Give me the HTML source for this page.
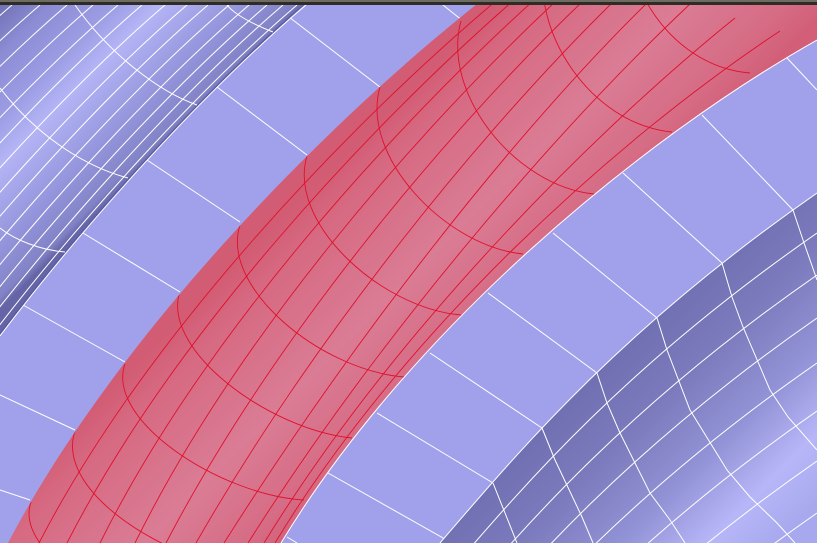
<!DOCTYPE html>
<html><head><meta charset="utf-8"><style>
html,body{margin:0;padding:0;width:817px;height:543px;overflow:hidden;background:#a1a0eb}
svg{display:block;overflow:hidden;position:absolute;left:0;top:0}
</style></head><body>
<svg width="817" height="543" viewBox="0 0 817 543" xmlns="http://www.w3.org/2000/svg">
<defs>
<linearGradient id="lt" gradientUnits="userSpaceOnUse" x1="155" y1="155" x2="0" y2="0">
<stop offset="0" stop-color="#6464a6"/><stop offset="0.04" stop-color="#8282c6"/>
<stop offset="0.2" stop-color="#9494dc"/><stop offset="0.47" stop-color="#b4b4f6"/>
<stop offset="0.62" stop-color="#9c9ce4"/><stop offset="0.82" stop-color="#8c8cd4"/>
<stop offset="1" stop-color="#6e6eb2"/></linearGradient>
<linearGradient id="br" gradientUnits="userSpaceOnUse" x1="487" y1="487" x2="660" y2="660">
<stop offset="0" stop-color="#7070b2"/><stop offset="0.25" stop-color="#7a7abc"/>
<stop offset="0.55" stop-color="#9292d6"/><stop offset="0.8" stop-color="#b6b6f8"/>
<stop offset="1" stop-color="#a8a8ee"/></linearGradient>
<linearGradient id="rd" gradientUnits="userSpaceOnUse" x1="250" y1="250" x2="420" y2="420">
<stop offset="0" stop-color="#d25c74"/><stop offset="0.15" stop-color="#d66a82"/>
<stop offset="0.55" stop-color="#da7c95"/><stop offset="0.85" stop-color="#d66c85"/>
<stop offset="1" stop-color="#d25e77"/></linearGradient>
<clipPath id="cl"><path d="M0,0 L310,0 C200,95 80,230 0,335 Z"/></clipPath>
<clipPath id="cr"><path d="M482,0 L817,0 L817,40 C640,140 410,330 281,543 L8,543 C120,330 330,120 482,0 Z"/></clipPath>
<clipPath id="cb"><path d="M440,543 C520,450 620,330 817,193 L817,543 Z"/></clipPath>
</defs>

<g stroke="#ffffff" stroke-width="1" fill="none">
<line x1="289" y1="17" x2="380" y2="87"/>
<line x1="443" y1="5" x2="463" y2="21"/>
<line x1="217" y1="87" x2="307" y2="155"/>
<line x1="147" y1="160" x2="240" y2="222"/>
<line x1="83" y1="233" x2="180" y2="292"/>
<line x1="23" y1="305" x2="125" y2="362"/>
<line x1="0" y1="395" x2="75" y2="430"/>
<line x1="0" y1="490" x2="30" y2="500"/>
<line x1="787" y1="58" x2="817" y2="90"/>
<line x1="702" y1="115" x2="793" y2="210"/>
<line x1="623" y1="173" x2="722" y2="263"/>
<line x1="553" y1="233" x2="657" y2="318"/>
<line x1="488" y1="293" x2="597" y2="373"/>
<line x1="430" y1="353" x2="542" y2="428"/>
<line x1="377" y1="413" x2="493" y2="483"/>
<line x1="328" y1="473" x2="452" y2="543"/>
<line x1="287" y1="537" x2="297" y2="543"/>
</g>

<path d="M0,0 L310,0 C200,95 80,230 0,335 Z" fill="url(#lt)"/>
<g clip-path="url(#cl)" stroke="#ffffff" stroke-width="1" fill="none">
<path d="M305,5 C200,95 80,230 0,335" stroke="#5a5aa0" stroke-width="3"/>
<path transform="translate(-8,0)" d="M305,5 C200,95 80,230 0,335"/>
<path transform="translate(-22,0)" d="M305,5 C200,95 80,230 0,335"/>
<path transform="translate(-38,0)" d="M305,5 C200,95 80,230 0,335"/>
<path transform="translate(-56,0)" d="M305,5 C200,95 80,230 0,335"/>
<path transform="translate(-76,0)" d="M305,5 C200,95 80,230 0,335"/>
<path transform="translate(-97,0)" d="M305,5 C200,95 80,230 0,335"/>
<path transform="translate(-118,0)" d="M305,5 C200,95 80,230 0,335"/>
<path transform="translate(-140,0)" d="M305,5 C200,95 80,230 0,335"/>
<path transform="translate(-163,0)" d="M305,5 C200,95 80,230 0,335"/>
<path transform="translate(-187,0)" d="M305,5 C200,95 80,230 0,335"/>
<path transform="translate(-212,0)" d="M305,5 C200,95 80,230 0,335"/>
<path transform="translate(-238,0)" d="M305,5 C200,95 80,230 0,335"/>
<path transform="translate(-265,0)" d="M305,5 C200,95 80,230 0,335"/>
<path transform="translate(-293,0)" d="M305,5 C200,95 80,230 0,335"/>
<path d="M273,32 C255,25 235,15 227,5"/>
<path d="M197,105 C160,92 110,55 75,5"/>
<path d="M128,178 C90,168 40,140 0,88"/>
<path d="M65,252 C40,250 15,240 0,228"/>
</g>
<path d="M306,5 C200,95 80,230 0,336" stroke="#ffffff" stroke-width="1" fill="none"/>

<path d="M482,0 L817,0 L817,40 C640,140 410,330 281,543 L8,543 C120,330 330,120 482,0 Z" fill="url(#rd)"/>
<g clip-path="url(#cr)" fill="none" stroke="#e0102c" stroke-width="0.9">
<path d="M497,0 C351,123 147,334 39,543"/>
<path d="M514,0 C371,125 173,335 67,543"/>
<path d="M534,0 C393,128 203,336 100,543"/>
<path d="M557,0 C417,131 236,338 135,543"/>
<path d="M584,0 C445,133 272,340 166,543"/>
<path d="M615,0 C477,135 311,342 196,543"/>
<path d="M650,0 C510,137 350,344 224,543"/>
<path d="M690,4 C548,138 373,345 248,543"/>
<path d="M735,18 C585,139 390,338 264,543"/>
<path d="M780,31 C615,140 402,333 275,543"/>
<path d="M31,502 C11,560 150,630 240,640"/>
<path d="M75,431 C55,490 160,560 262,575"/>
<path d="M125,364 C105,420 220,495 304,500"/>
<path d="M180,291 C160,350 270,430 352,438"/>
<path d="M240,225 C220,287 320,370 404,377"/>
<path d="M307,156 C287,222 380,308 461,315"/>
<path d="M380,87 C360,156 445,246 523,254"/>
<path d="M461,21 C441,93 515,186 594,194"/>
<path d="M545,-40 C530,30 590,124 672,132"/>
<path d="M630,-100 C612,-30 665,66 750,73"/>
</g>
<path d="M817,40 C640,140 410,330 281,543" fill="none" stroke="#ffffff" stroke-width="1"/>

<path d="M440,543 C520,450 620,330 817,193 L817,543 Z" fill="url(#br)"/>
<g clip-path="url(#cb)" stroke="#ffffff" stroke-width="1" fill="none">
<path transform="translate(0,40)" d="M440,543 C520,450 620,330 817,193"/>
<path transform="translate(0,82)" d="M440,543 C520,450 620,330 817,193"/>
<path transform="translate(0,125)" d="M440,543 C520,450 620,330 817,193"/>
<path transform="translate(0,170)" d="M440,543 C520,450 620,330 817,193"/>
<path transform="translate(0,218)" d="M440,543 C520,450 620,330 817,193"/>
<path transform="translate(0,268)" d="M440,543 C520,450 620,330 817,193"/>
<path transform="translate(0,320)" d="M440,543 C520,450 620,330 817,193"/>
<polyline points="793,210 803,240 817,280"/>
<polyline points="722,263 732,297 743,327 770,390 788,417 817,450"/>
<polyline points="657,318 667,350 690,410 727,470 750,497 777,523 795,543"/>
<polyline points="597,373 607,403 620,433 650,493 670,520 685,543"/>
<polyline points="542,428 555,460 582,517 593,543"/>
<polyline points="493,483 505,513 517,543"/>
</g>
<path d="M440,543 C520,450 620,330 817,193" fill="none" stroke="#ffffff" stroke-width="1"/>

<rect x="0" y="0" width="817" height="2" fill="#6e6c60"/>
<rect x="0" y="2" width="817" height="3" fill="#2e2c26"/>
</svg>
</body></html>
